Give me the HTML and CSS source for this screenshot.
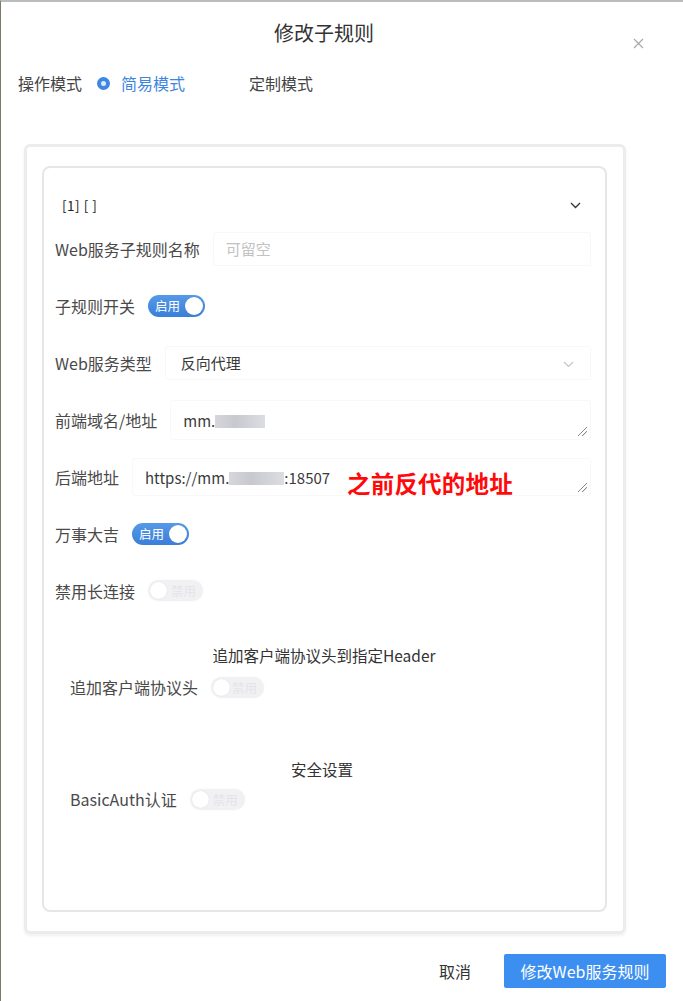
FILE: index.html
```html
<!DOCTYPE html>
<html lang="zh-CN">
<head>
<meta charset="utf-8">
<title>修改子规则</title>
<link rel="stylesheet" href="styles.css">
</head>
<body>
<div class="dialog">
  <div class="head">
    <h1 class="title">修改子规则</h1>
    <span class="close"><svg width="11" height="11" viewBox="0 0 11 11"><path d="M1 1L10 10M10 1L1 10" stroke="#a8a8a8" stroke-width="1.2" fill="none"/></svg></span>
  </div>
  <div class="mode-row">
    <span class="mode-label">操作模式</span>
    <span class="radio checked"><span class="radio-dot"></span>简易模式</span>
    <span class="radio"><span class="radio-dot off"></span>定制模式</span>
  </div>

  <div class="outer">
    <div class="inner">
      <div class="rule-head">
        <span class="rule-id">[1] [ ]</span>
        <svg class="chev" width="11" height="7" viewBox="0 0 11 7"><path d="M1 1L5.5 5.5L10 1" stroke="#333" stroke-width="1.3" fill="none"/></svg>
      </div>

      <div class="row">
        <span class="lbl">Web服务子规则名称</span>
        <div class="field input"><span class="ph">可留空</span></div>
      </div>
      <div class="row">
        <span class="lbl">子规则开关</span>
        <span class="switch on"><span class="sw-text">启用</span><span class="knob"></span></span>
      </div>
      <div class="row">
        <span class="lbl">Web服务类型</span>
        <div class="field select"><span class="val">反向代理</span>
          <svg class="sel-chev" width="11" height="7" viewBox="0 0 11 7"><path d="M1 1L5.5 5.5L10 1" stroke="#c4c4c4" stroke-width="1.2" fill="none"/></svg>
        </div>
      </div>
      <div class="row">
        <span class="lbl">前端域名/地址</span>
        <div class="field area"><span class="val">mm.<span class="blur w50"></span></span><span class="grip"></span></div>
      </div>
      <div class="row">
        <span class="lbl">后端地址</span>
        <div class="field area area-b"><span class="val">https://mm.<span class="blur w54"></span>:18507</span><span class="grip"></span>
          <span class="note">之前反代的地址</span>
        </div>
      </div>
      <div class="row">
        <span class="lbl">万事大吉</span>
        <span class="switch on"><span class="sw-text">启用</span><span class="knob"></span></span>
      </div>
      <div class="row">
        <span class="lbl">禁用长连接</span>
        <span class="switch off"><span class="knob"></span><span class="sw-text">禁用</span></span>
      </div>

      <div class="section-title first">追加客户端协议头到指定Header</div>
      <div class="sub-row">
        <span class="lbl">追加客户端协议头</span>
        <span class="switch off narrow"><span class="knob"></span><span class="sw-text">禁用</span></span>
      </div>

      <div class="section-title second">安全设置</div>
      <div class="sub-row">
        <span class="lbl">BasicAuth认证</span>
        <span class="switch off"><span class="knob"></span><span class="sw-text">禁用</span></span>
      </div>
    </div>
  </div>

  <div class="footer">
    <button class="btn-text">取消</button>
    <button class="btn-primary">修改Web服务规则</button>
  </div>
</div>
</body>
</html>
```

FILE: styles.css
```css
* { box-sizing: border-box; }
html, body { margin: 0; padding: 0; background: #ffffff; }
body {
  font-family: "Noto Sans CJK SC", "Noto Sans", sans-serif;
  color: #333;
}
.dialog {
  position: relative;
  width: 683px;
  height: 1001px;
  background: #fff;
  border-top: 2px solid #b9bdbd;
  border-left: 1px solid #7d786b;
  overflow: hidden;
}
.head {
  position: relative;
  padding-top: 18px;
  height: 46px;
}
.title {
  margin: 0;
  font-size: 20px;
  line-height: 26px;
  font-weight: 400;
  text-align: center;
  color: #333;
  padding-right: 36px;
}
.close {
  position: absolute;
  right: 39px;
  top: 36px;
  display: block;
  line-height: 0;
}
.mode-row {
  display: flex;
  align-items: center;
  height: 20px;
  margin-top: 25px;
  padding-left: 17px;
  font-size: 16px;
  color: #444;
}
.mode-label { margin-right: 15px; }
.radio {
  display: flex;
  align-items: center;
  gap: 11px;
}
.radio.checked { color: #3d86e0; }
.radio + .radio { margin-left: 40px; }
.radio-dot {
  width: 13px;
  height: 13px;
  border-radius: 50%;
  border: 4px solid #3f87e2;
  background: #dfeafb;
}
.radio-dot.off { border: 1px solid #fff; background: #fff; }

.outer {
  margin: 51px 0 0 23px;
  width: 602px;
  height: 790px;
  border: 3px solid #ececec;
  border-radius: 6px;
  box-shadow: 0 2px 3px rgba(0,0,0,0.06);
  padding: 19px 16px 19px 15px;
}
.inner {
  height: 100%;
  border: 2px solid #e6e6e6;
  border-radius: 8px;
  padding: 22px 14px 0 11px;
}
.rule-head {
  display: flex;
  align-items: center;
  justify-content: space-between;
  height: 30px;
  padding-left: 7px;
  padding-right: 10px;
  font-size: 13.5px;
  color: #222;
}
.rule-id { letter-spacing: 0.5px; }
.row {
  position: relative;
  display: flex;
  align-items: center;
  gap: 13px;
  height: 57px;
  font-size: 16px;
}
.lbl { color: #4a4a4a; white-space: nowrap; }
.field {
  position: relative;
  flex: 1;
  display: flex;
  align-items: center;
  padding-left: 12px;
  font-size: 15px;
  color: #3a3a3a;
  border: 1px solid #f8f8f8;
  border-radius: 3px;
}
.input { height: 34px; }
.input .ph { color: #c2c2c2; }
.select { height: 34px; padding-left: 15px; }
.sel-chev { position: absolute; right: 16px; top: 14px; }
.area { height: 40px; align-items: flex-start; padding-top: 9px; }
.area-b { height: 38px; padding-top: 8px; }
.val { white-space: nowrap; }
.blur {
  display: inline-block;
  height: 13px;
  vertical-align: -1px;
  background: linear-gradient(90deg, #d6d6dc 0%, #c8c9cf 40%, #d2d3d8 70%, #dcdde2 100%);
}
.w50 { width: 50px; }
.w54 { width: 55px; }
.grip {
  position: absolute;
  right: 3px;
  bottom: 3px;
  width: 9px;
  height: 9px;
  background: linear-gradient(135deg, transparent 45%, #888 46%, #888 52%, transparent 53%, transparent 70%, #888 71%, #888 77%, transparent 78%);
}
.note {
  position: absolute;
  left: 214px;
  top: 7px;
  font-size: 23.5px;
  font-weight: 700;
  color: #ff0a0a;
  white-space: nowrap;
  letter-spacing: 0.2px;
}
.switch {
  position: relative;
  display: inline-flex;
  align-items: center;
  width: 57px;
  height: 22px;
  border-radius: 11px;
  padding: 0 2px 0 7px;
  font-size: 12.5px;
}
.switch.on {
  background: linear-gradient(180deg, #5599e8, #3a7fd8);
  color: #fff;
  justify-content: space-between;
}
.switch.off {
  background: #f1f1f3;
  color: #e4e4e8;
  padding: 0 7px 0 2px;
  justify-content: space-between;
  width: 55px;
  height: 21px;
  box-shadow: 0 0 3px rgba(0,0,0,0.04);
}
.switch.narrow { width: 53px; }
.knob {
  width: 18px;
  height: 18px;
  border-radius: 50%;
  background: #fff;
  box-shadow: 0 0 1px rgba(0,0,0,0.15);
}
.switch.off .knob { width: 17px; height: 17px; }
.section-title {
  text-align: center;
  font-size: 15.5px;
  line-height: 20px;
  color: #333;
  padding-left: 2px;
}
.section-title.first { margin-top: 26px; }
.section-title.second { margin-top: 50px; padding-left: 0; padding-right: 2px; }
.sub-row {
  display: flex;
  align-items: center;
  gap: 13px;
  padding-left: 15px;
  height: 44px;
  font-size: 16px;
}
.section-title.second + .sub-row { height: 40px; }

.footer {
  display: flex;
  justify-content: flex-end;
  align-items: center;
  gap: 17px;
  margin-top: 20px;
  padding-right: 17px;
}
.btn-text {
  font-family: inherit;
  font-size: 16px;
  color: #333;
  background: #fff;
  border: none;
  width: 64px;
  height: 34px;
  padding: 0;
}
.btn-primary {
  font-family: inherit;
  font-size: 16px;
  color: #fff;
  background: #3c8ff0;
  border: none;
  border-radius: 2px;
  width: 162px;
  height: 34px;
  padding: 0;
}
```
